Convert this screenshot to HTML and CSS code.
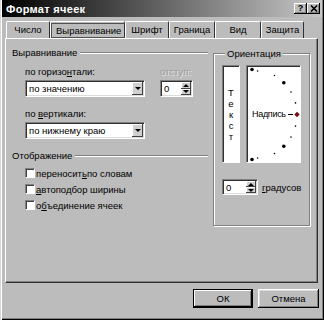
FILE: index.html
```html
<!DOCTYPE html>
<html lang="ru">
<head>
<meta charset="utf-8">
<title>Формат ячеек</title>
<link rel="stylesheet" href="styles.css">
</head>
<body>
<div class="dlg">
	<div class="title">
		<span class="caption">Формат ячеек</span>
		<div class="tbtns">
			<span class="tb q">?</span>
			<span class="tb x">
				<svg width="8" height="7" viewBox="0 0 8 7"><path d="M1 0.5L7 6.5M7 0.5L1 6.5" stroke="#000" stroke-width="1.6"/></svg>
			</span>
		</div>
	</div>

	<div class="tabs">
		<div class="tab w44">Число</div>
		<div class="tab sel w75"><span class="focus">Выравнивание</span></div>
		<div class="tab w44">Шрифт</div>
		<div class="tab w46">Граница</div>
		<div class="tab w46">Вид</div>
		<div class="tab w43">Защита</div>
	</div>

	<div class="panel">
		<div class="left">
			<div class="grp"><span>Выравнивание</span><i></i></div>

			<div class="hrow">
				<div class="field">
					<div class="lbl">по горизо<u>н</u>тали:</div>
					<div class="combo"><span class="val">по значению</span><span class="drop"><b></b></span></div>
				</div>
				<div class="field ind">
					<div class="lbl dis">отступ:</div>
					<div class="spin"><span class="val">0</span><span class="arrows"><span class="up"><b></b></span><span class="dn"><b></b></span></span></div>
				</div>
			</div>

			<div class="field vert">
				<div class="lbl">по <u>в</u>ертикали:</div>
				<div class="combo"><span class="val">по нижнему краю</span><span class="drop"><b></b></span></div>
			</div>

			<div class="grp g2"><span>Отображение</span><i></i></div>

			<div class="checks">
				<div class="chk"><span class="box"></span>переносит<u>ь</u> по словам</div>
				<div class="chk"><span class="box"></span><u>а</u>втоподбор ширины</div>
				<div class="chk"><span class="box"></span>о<u>б</u>ъединение ячеек</div>
			</div>
		</div>

		<fieldset class="orient">
			<legend>Ориентация</legend>
			<div class="boxes">
				<div class="vtext"><span>Т</span><span>е</span><span>к</span><span>с</span><span>т</span></div>
				<div class="dial">
					<svg class="dots" width="55" height="98" viewBox="0 0 55 98">
						<circle cx="6" cy="4.5" r="1.8"/>
						<circle cx="11.6" cy="6" r="0.8"/>
						<circle cx="28.5" cy="10.5" r="0.8"/>
						<circle cx="37.8" cy="17.7" r="1.8"/>
						<circle cx="45" cy="27" r="0.8"/>
						<circle cx="49.5" cy="37.9" r="0.8"/>
						<path d="M42 49.5H47" stroke="#000" stroke-width="1"/>
						<path d="M51 46.8L53.7 49.5L51 52.2L48.3 49.5Z" fill="#7a1010"/>
						<circle cx="49.5" cy="61.1" r="0.8"/>
						<circle cx="45" cy="72" r="0.8"/>
						<circle cx="37.8" cy="81.3" r="1.8"/>
						<circle cx="28.5" cy="88.5" r="0.8"/>
						<circle cx="11.6" cy="93" r="0.8"/>
						<circle cx="6" cy="94.5" r="1.8"/>
					</svg>
					<span class="nadp">Надпись</span>
				</div>
			</div>
			<div class="deg">
				<div class="spin s2"><span class="val">0</span><span class="arrows"><span class="up"><b></b></span><span class="dn"><b></b></span></span></div>
				<span class="degl"><u>г</u>радусов</span>
			</div>
		</fieldset>
	</div>

	<div class="foot">
		<button class="btn def">ОК</button>
		<button class="btn">Отмена</button>
	</div>
</div>
</body>
</html>
```

FILE: styles.css
```css
* { box-sizing: border-box; }
body { margin: 0; font-family: "Liberation Sans", Arial, sans-serif; font-size: 9.5px; color: #000; background: #bcbcbc; }

.dlg {
	width: 324px; height: 320px; background: #bcbcbc;
	padding: 0 2px 2px 2px;
	display: flex; flex-direction: column;
	box-shadow: inset 1px 0 0 #d8d8d8, inset 2px 0 0 #fff, inset -1px -1px 0 #000, inset -2px -2px 0 #808080;
}

.title {
	height: 17px; display: flex; align-items: center; justify-content: space-between;
	background: linear-gradient(90deg, #000 0%, #c8c8c8 100%);
	padding: 0 2px 0 4px;
}
.caption { color: #fff; font-weight: bold; font-size: 11px; letter-spacing: 0.3px; }
.tbtns { display: flex; }
.tb {
	width: 13px; height: 11px; background: #bcbcbc; display: flex; align-items: center; justify-content: center;
	box-shadow: inset -1px -1px 0 #000, inset 1px 1px 0 #fff, inset -2px -2px 0 #808080;
	font-weight: bold; font-size: 9px; line-height: 9px;
}

.tabs { display: flex; margin: 4px 0 0 4px; height: 17px; }
.tab {
	height: 17px; line-height: 15px; text-align: center;
	border-top: 1px solid #fff; border-left: 1px solid #fff; border-right: 1px solid #303030;
	border-radius: 2px 2px 0 0;
}
.w43 { width: 43px; } .w44 { width: 44px; } .w46 { width: 46px; } .w75 { width: 75px; }
.tab.sel { line-height: 13px; padding-top: 1px; }
.focus { display: inline-block; border: 1px solid #505050; padding: 0 4px; }

.panel {
	margin-left: 3px; width: 313px; height: 245px;
	border: 1px solid; border-color: #fff #303030 #303030 #fff;
	box-shadow: inset -1px -1px 0 #808080;
	display: flex; padding: 7px 5px 0 6px;
}

.left { width: 201px; }
.grp { display: flex; align-items: center; line-height: 13px; padding-right: 5px; }
.grp i { flex: 1; height: 2px; margin-left: 3px; border-top: 1px solid #808080; border-bottom: 1px solid #fff; }
.g2 { margin-top: 10px; }

.hrow { display: flex; }
.field { margin-left: 13px; }
.field.ind { margin-left: 15px; }
.lbl { line-height: 13px; margin-top: 6px; margin-bottom: 2px; }
.vert .lbl { margin-top: 10px; }
.dis { color: #9a9a9a; text-shadow: 1px 1px 0 #e4e4e4; }

.combo, .spin {
	height: 17px; background: #fff; display: flex;
	border: 1px solid; border-color: #808080 #fff #fff #808080;
	box-shadow: inset 1px 1px 0 #303030, inset -1px -1px 0 #dcdcdc;
	padding: 1px;
}
.combo { width: 120px; }
.val { flex: 1; line-height: 13px; padding-left: 2px; }
.drop {
	width: 11px; height: 13px; background: #cfcfcf; display: flex; align-items: center; justify-content: center;
	box-shadow: inset -1px -1px 0 #404040, inset 1px 1px 0 #fff;
}
.drop b { border: 3px solid transparent; border-top: 3px solid #000; border-bottom: 0; }

.spin { width: 33px; }
.arrows { width: 10px; display: flex; flex-direction: column; }
.arrows span {
	flex: 1; background: #cfcfcf; display: flex; align-items: center; justify-content: center;
	box-shadow: inset -1px -1px 0 #404040, inset 1px 1px 0 #fff;
}
.up b { border: 3px solid transparent; border-bottom: 3px solid #000; border-top: 0; }
.dn b { border: 3px solid transparent; border-top: 3px solid #000; border-bottom: 0; }

.checks { margin: 3px 0 0 13px; }
.chk { display: flex; align-items: center; height: 16px; }
.box {
	width: 10px; height: 10px; margin-right: 1px; background: #fff;
	border: 1px solid; border-color: #808080 #fff #fff #808080;
	box-shadow: inset 1px 1px 0 #404040;
}

.orient {
	margin: 1px 0 0 0; width: 97px; height: 179px;
	border: 1px solid #808080; box-shadow: inset 1px 1px 0 #fff, 1px 1px 0 #fff;
	padding: 5px 8px 0 8px;
}
.orient legend { line-height: 13px; padding: 0 2px; margin-left: 3px; background: #bcbcbc; }
.boxes { display: flex; gap: 6px; }
.vtext, .dial {
	height: 98px; background: #fff;
	border: 1px solid; border-color: #808080 #fff #fff #808080;
	box-shadow: inset 1px 1px 0 #303030;
}
.vtext { width: 18px; display: flex; flex-direction: column; align-items: center; justify-content: center; line-height: 11px; }
.dial { width: 55px; position: relative; display: flex; align-items: center; padding-left: 5px; }
.dots { position: absolute; left: -1px; top: -1px; }
.nadp { position: relative; font-size: 9px; letter-spacing: -0.3px; }

.deg { display: flex; align-items: center; margin-top: 16px; }
.s2 { width: 36px; height: 16px; }
.degl { margin-left: 4px; }

.foot { display: flex; justify-content: flex-end; gap: 5px; margin-top: 6px; padding-right: 3px; }
.btn {
	height: 19px; width: 61px; padding: 0; border: 0; background: #bcbcbc;
	font-family: "Liberation Sans", Arial, sans-serif; font-size: 9.5px; color: #000;
	box-shadow: inset -1px -1px 0 #000, inset 1px 1px 0 #fff, inset -2px -2px 0 #808080, inset 2px 2px 0 #dcdcdc;
}
.btn.def { width: 60px; border: 1px solid #000; box-shadow: inset -1px -1px 0 #000, inset 1px 1px 0 #fff, inset -2px -2px 0 #808080; }
```
